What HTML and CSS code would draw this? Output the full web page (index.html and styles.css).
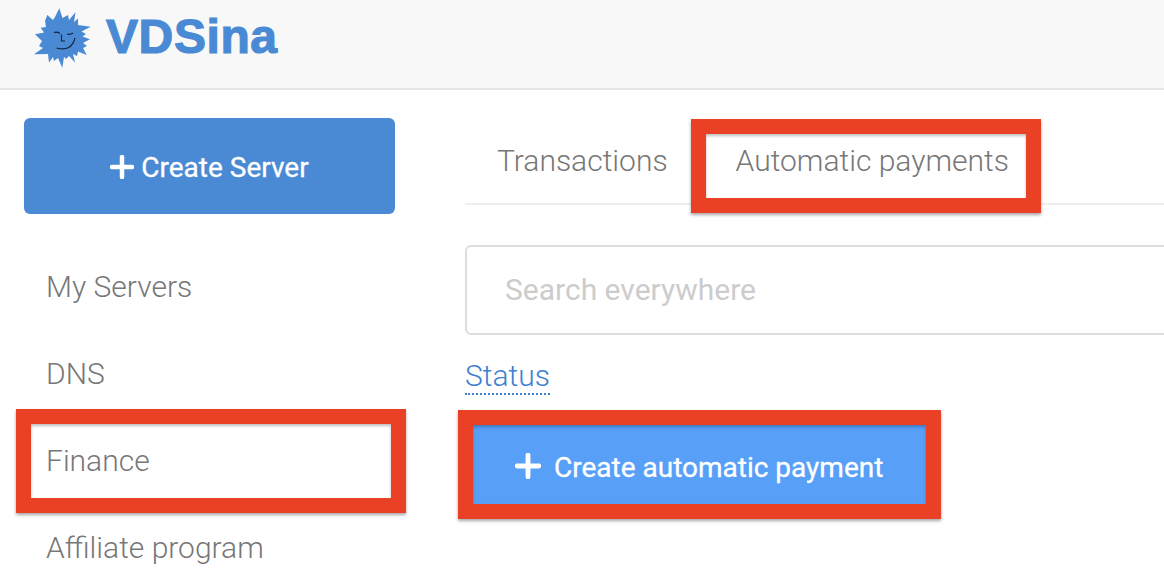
FILE: index.html
```html
<!DOCTYPE html>
<html lang="en">
<head>
<meta charset="utf-8">
<title>VDSina</title>
<link rel="stylesheet" href="styles.css">
</head>
<body>
<header class="topbar">
  <svg class="sun" viewBox="0 0 90 70" aria-hidden="true">
    <polygon class="sun-body" points="39.300,3.300 42.500,13 48,10 49,15 55.500,7.300 54,17 58,13.500 58,20 70.700,21.700 61.500,26.500 66,29 62.500,31.500 70,34.300 63,38 67,41 63,43 66.700,50 58,46.500 57,51 53,49 55,57.500 49,51 46,54 44,52 42.300,62.700 38,53 34,56 33,52 29,57.500 28,49 14,49.300 23,43 19,41 22,36 15,29.300 24,27.500 20.700,22.700 26,22 25,16 27.300,10 33,15 35,12"/>
    <path class="sun-face" d="M34 27.500q3-1 6 1M47 29q3 1 6-1M41.500 29.500v6.500h3.500M36.500 43q15 4 18.500-10"/>
  </svg>
  <span class="wordmark">VDSina</span>
</header>
<div class="page">
  <aside class="sidebar">
    <a class="create-server">
      <svg class="plus" viewBox="0 0 24 24" aria-hidden="true"><path d="M12 2v20M2 12h20"/></svg>
      <span>Create Server</span>
    </a>
    <nav class="nav">
      <a class="nav-item">My Servers</a>
      <a class="nav-item">DNS</a>
      <a class="nav-item">Finance</a>
      <a class="nav-item">Affiliate program</a>
    </nav>
  </aside>
  <main class="main">
    <div class="tabs">
      <a class="tab">Transactions</a>
      <a class="tab">Automatic payments</a>
    </div>
    <input class="search" type="text" placeholder="Search everywhere">
    <div class="filter-row"><a class="filter">Status</a></div>
    <a class="create-payment">
      <svg class="plus plus-lg" viewBox="0 0 24 24" aria-hidden="true"><path d="M12 2v20M2 12h20"/></svg>
      <span>Create automatic payment</span>
    </a>
  </main>
</div>
<div class="callout callout-tab"></div>
<div class="callout callout-finance"></div>
<div class="callout callout-button"></div>
</body>
</html>
```
FILE: styles.css
```css
* { box-sizing: border-box; }
html, body { margin: 0; height: 588px; overflow: hidden; background: #fff; }
body { font-family: Roboto, "Liberation Sans", sans-serif; color: #777; position: relative; width: 1164px; }

.topbar {
  height: 90px;
  background: #f8f8f8;
  border-bottom: 2px solid #e6e6e6;
  display: flex;
  align-items: flex-start;
  padding-left: 20px;
}
.sun { width: 90px; height: 70px; margin-top: 5px; flex: none; }
.sun-body { fill: #4a8ad4; }
.sun-face { fill: none; stroke: #14233a; stroke-width: 1.1; }
.wordmark {
  font-family: "Liberation Sans", sans-serif;
  font-weight: 700;
  font-size: 48px;
  line-height: 54px;
  color: #4a8ad4;
  margin: 10px 0 0 -4px;
  letter-spacing: .6px;
  -webkit-text-stroke: 1.2px #4a8ad4;
}

.page { display: flex; align-items: flex-start; }

.sidebar { width: 465px; flex: none; padding: 28px 70px 0 24px; }
.create-server {
  display: flex;
  align-items: center;
  justify-content: center;
  gap: 7px;
  height: 96px;
  padding-top: 2px;
  background: #4a8ad4;
  border-radius: 6px;
  color: #fff;
  font-size: 28px;
  font-weight: 400;
  -webkit-text-stroke: .3px #fff;
}
.plus { width: 24px; height: 24px; flex: none; }
.plus path { fill: none; stroke: #fff; stroke-width: 4.500; stroke-linecap: round; }
.plus-lg { width: 26px; height: 26px; margin-bottom: 4px; }

.nav { display: flex; flex-direction: column; margin-top: 29px; padding-left: 22px; }
.nav-item { height: 87px; line-height: 87px; font-size: 30px; font-weight: 300; }

.main { flex: 1; min-width: 0; padding-top: 26px; }
.tabs {
  display: flex;
  height: 89px;
  border-bottom: 2px solid #eee;
  padding: 25px 0 0 32px;
  gap: 68px;
  margin-right: -10px;
}
.tab { font-size: 30px; font-weight: 300; line-height: 40px; }
.search {
  display: block;
  width: 720px;
  height: 90px;
  margin-top: 40px;
  border: 2px solid #ddd;
  border-radius: 6px;
  padding: 0 38px 2px;
  font: 400 30px Roboto, sans-serif;
  background: #fff;
  outline: none;
}
.search::placeholder { color: #ccc; opacity: 1; }
.filter-row { margin-top: 24px; display: flex; }
.filter {
  font-size: 30px;
  font-weight: 300;
  line-height: 34px;
  color: #3f7fd0;
  border-bottom: 2px dotted #3f7fd0;
}
.create-payment {
  display: flex;
  align-items: center;
  gap: 13px;
  width: 453px;
  height: 79px;
  margin: 30px 0 0 8px;
  padding: 6px 0 0 42px;
  background: #589ff8;
  color: #fff;
  font-size: 28px;
  font-weight: 400;
  -webkit-text-stroke: .3px #fff;
}

.callout {
  position: absolute;
  border: 15px solid #ea4025;
  box-shadow: 0 2px 3px rgba(0, 0, 0, .35), inset 0 2px 3px rgba(0, 0, 0, .25);
}
.callout-tab { left: 691px; top: 119px; width: 350px; height: 94px; }
.callout-finance { left: 16px; top: 409px; width: 390px; height: 104px; }
.callout-button { left: 458px; top: 410px; width: 483px; height: 109px; }
```
